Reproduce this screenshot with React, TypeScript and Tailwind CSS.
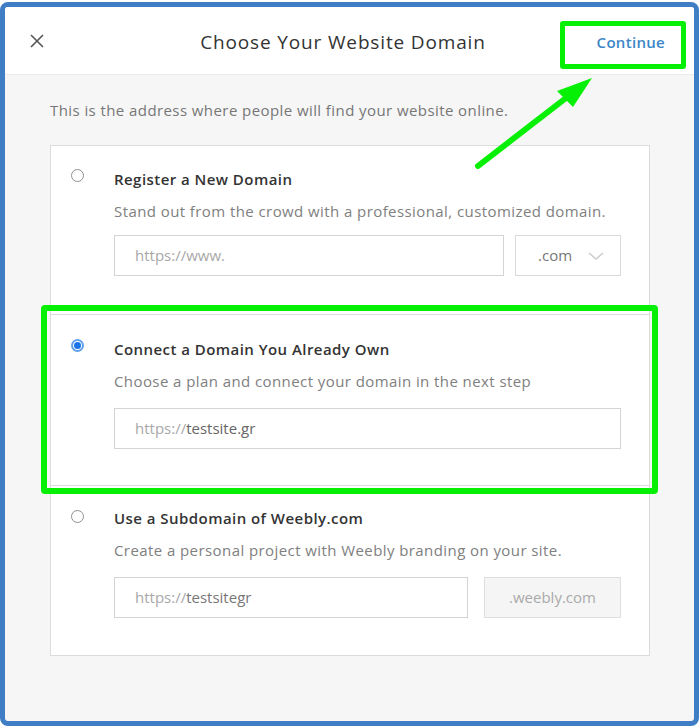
import React from 'react';

const Radio: React.FC<{ checked?: boolean }> = ({ checked }) =>
    checked ? (
        <span className="flex w-[13px] h-[13px] items-center justify-center rounded-full border-[2px] border-[#62a0ea] bg-white">
            <span className="block w-[7px] h-[7px] rounded-full bg-[#1a73e8]" />
        </span>
    ) : (
        <span className="block w-[13px] h-[13px] rounded-full border border-[#8f8f8f] bg-white" />
    );

const App: React.FC = () => {
    return (
        <div
            className="relative w-[700px] h-[726px] bg-white pt-[2px] pr-[1px] overflow-hidden"
            style={{ fontFamily: '"Open Sans", "Liberation Sans", sans-serif' }}
        >
            <div className="h-[724px] border-[5px] border-[#3f7dc5] rounded-[8px] bg-[#f6f6f6] flex flex-col overflow-hidden">
                {/* header */}
                <div className="relative h-[68px] shrink-0 bg-white border-b border-[#ebebeb] flex items-center">
                    <div className="w-[150px] pl-[25px] flex items-center">
                        <svg width="14" height="14" viewBox="0 0 14 14" className="mt-[1px]">
                            <path d="M1 1 L13 13 M13 1 L1 13" stroke="#555" strokeWidth="1.6" fill="none" />
                        </svg>
                    </div>
                    <div className="flex-1 text-center text-[19px] tracking-[0.85px] text-[#333] leading-[24px] pt-[3px]">
                        Choose Your Website Domain
                    </div>
                    <div className="w-[163px] flex justify-end pr-[29px]">
                        <span className="text-[15px] font-semibold tracking-[0.3px] text-[#3a86c6] leading-[20px] pt-[2px]">Continue</span>
                    </div>
                    <div className="absolute left-[555px] top-[14px] w-[126px] h-[48px] border-[5px] border-[#05f005] rounded-[3px]" />
                </div>

                {/* body */}
                <div className="flex-1 pl-[45px] pr-[44px] pt-[25px] tracking-[0.42px]">
                    <p className="text-[15px] leading-[20px] text-[#777]">
                        This is the address where people will find your website online.
                    </p>

                    <div className="mt-[25px] bg-white border border-[#dcdcdc]">
                        {/* option 1 */}
                        <div className="flex pl-[20px] pr-[28px] pt-[23px] pb-[38px]">
                            <div className="w-[43px]">
                                <Radio />
                            </div>
                            <div className="flex-1">
                                <div className="text-[15px] leading-[20px] font-semibold tracking-[0.45px] text-[#333]">Register a New Domain</div>
                                <div className="mt-[12px] text-[15px] leading-[20px] text-[#808080]">
                                    Stand out from the crowd with a professional, customized domain.
                                </div>
                                <div className="mt-[14px] flex gap-[11px] h-[41px]">
                                    <div className="flex-1 border border-[#d4d4d4] flex items-center pl-[20px] text-[15px] tracking-normal text-[#a8a8a8]">
                                        https://www.
                                    </div>
                                    <div className="w-[106px] border border-[#d9d9d9] flex items-center pl-[22px] text-[15px] tracking-normal text-[#777]">
                                        .com
                                        <svg width="16" height="8" viewBox="0 0 16 8" className="ml-[16px]">
                                            <path d="M1 1 L8 7 L15 1" stroke="#cfcfcf" strokeWidth="1.6" fill="none" />
                                        </svg>
                                    </div>
                                </div>
                            </div>
                        </div>

                        {/* option 2 */}
                        <div className="relative flex border-t border-[#dcdcdc] pl-[20px] pr-[28px] pt-[24px] pb-[36px]">
                            <div className="w-[43px]">
                                <Radio checked />
                            </div>
                            <div className="flex-1">
                                <div className="text-[15px] leading-[20px] font-semibold tracking-[0.45px] text-[#333]">Connect a Domain You Already Own</div>
                                <div className="mt-[12px] text-[15px] leading-[20px] text-[#808080]">
                                    Choose a plan and connect your domain in the next step
                                </div>
                                <div className="mt-[17px] flex h-[41px]">
                                    <div className="flex-1 border border-[#d4d4d4] flex items-center pl-[20px] text-[15px] tracking-normal">
                                        <span className="text-[#a8a8a8]">https://</span>
                                        <span className="text-[#666]">testsite.gr</span>
                                    </div>
                                </div>
                            </div>
                            <div className="absolute -left-[10px] -right-[9px] -top-[10px] -bottom-[9px] border-[6px] border-[#05f005] rounded-[4px]" />
                        </div>

                        {/* option 3 */}
                        <div className="flex border-t border-[#dcdcdc] pl-[20px] pr-[28px] pt-[22px] pb-[37px]">
                            <div className="w-[43px] pt-[2px]">
                                <Radio />
                            </div>
                            <div className="flex-1">
                                <div className="text-[15px] leading-[20px] font-semibold tracking-[0.45px] text-[#333]">Use a Subdomain of Weebly.com</div>
                                <div className="mt-[12px] text-[15px] leading-[20px] text-[#808080]">
                                    Create a personal project with Weebly branding on your site.
                                </div>
                                <div className="mt-[17px] flex gap-[16px] h-[41px]">
                                    <div className="flex-1 border border-[#d4d4d4] flex items-center pl-[20px] text-[15px] tracking-normal">
                                        <span className="text-[#a8a8a8]">https://</span>
                                        <span className="text-[#777]">testsitegr</span>
                                    </div>
                                    <div className="w-[137px] border border-[#dedede] bg-[#f5f5f5] flex items-center justify-center text-[15px] tracking-normal text-[#aaa]">
                                        .weebly.com
                                    </div>
                                </div>
                            </div>
                        </div>
                    </div>
                </div>
            </div>

            {/* annotation arrow */}
            <svg width="700" height="726" viewBox="0 0 700 726" className="absolute inset-0 pointer-events-none">
                <line x1="478" y1="166" x2="566" y2="98" stroke="#05f005" strokeWidth="6" strokeLinecap="round" />
                <polygon points="592,78 557,91 573,107" fill="#05f005" />
            </svg>
        </div>
    );
};

export default App;
